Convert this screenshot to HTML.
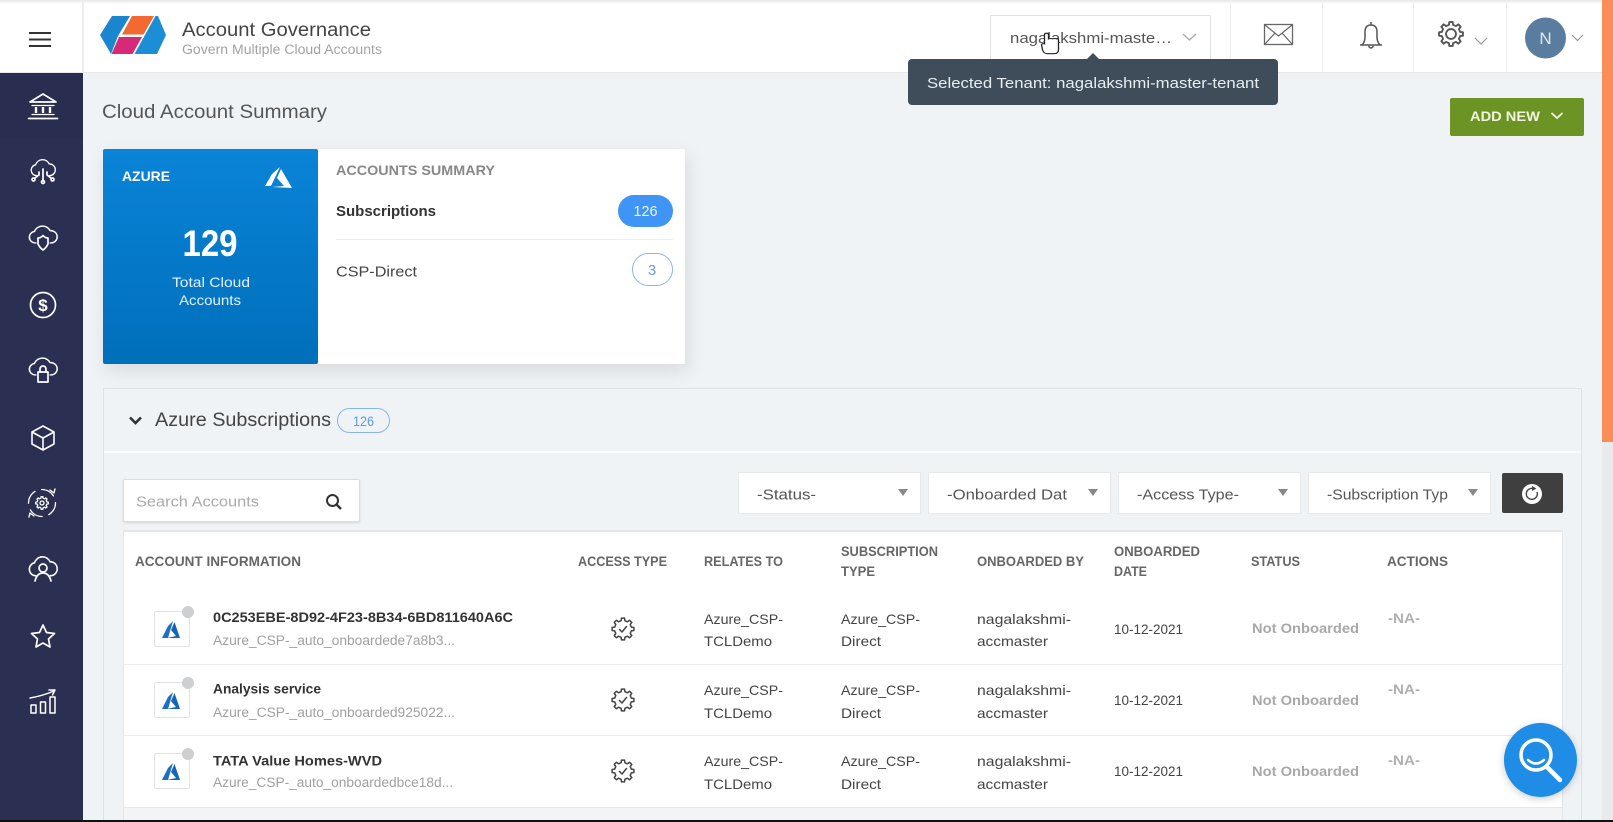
<!DOCTYPE html>
<html lang="en"><head><meta charset="utf-8"><title>Account Governance</title>
<style>
html,body{margin:0;padding:0;width:1613px;height:822px;overflow:hidden;background:#f0f3f6;font-family:"Liberation Sans",sans-serif}
div{position:absolute;box-sizing:border-box}
svg{position:absolute;left:0;top:0;filter:blur(.3px)}
text{font-family:"Liberation Sans",sans-serif}
</style></head><body>
<div style="left:0;top:0;width:1613px;height:73px;background:linear-gradient(#e6e6e6 0,#fff 4px);border-bottom:1px solid #e6e8ea"></div>
<div style="left:82px;top:0;width:2px;height:73px;background:#eeeeee"></div>
<div style="left:0;top:73px;width:83px;height:749px;background:#2b2f52"></div>
<div style="left:0;top:73px;width:83px;height:66px;background:#292d4f"></div>
<div style="left:1602px;top:0;width:11px;height:442px;background:#fb8d58"></div>
<div style="left:1602px;top:442px;width:11px;height:380px;background:#e8eaec"></div>
<div style="left:1230px;top:0;width:1px;height:72px;background:#f0f0f0"></div>
<div style="left:1322px;top:0;width:1px;height:72px;background:#f0f0f0"></div>
<div style="left:1413px;top:0;width:1px;height:72px;background:#f0f0f0"></div>
<div style="left:1506px;top:0;width:1px;height:72px;background:#f0f0f0"></div>
<div style="left:990px;top:15px;width:221px;height:58px;background:#fff;border:1px solid #e2e2e2"></div>
<div style="left:908px;top:59px;width:370px;height:46px;background:#3f4d5b;border-radius:4px"></div>
<div style="left:1450px;top:98px;width:134px;height:38px;background:#6b9424;border-radius:2px"></div>
<div style="left:103px;top:149px;width:582px;height:215px;background:#fff;box-shadow:3px 7px 18px rgba(0,0,0,.1)"></div>
<div style="left:103px;top:149px;width:215px;height:215px;background:linear-gradient(#0a84d8,#006fba);border-radius:2px"></div>
<div style="left:618px;top:195px;width:55px;height:32px;background:#3f95f5;border-radius:16px"></div>
<div style="left:336px;top:239px;width:337px;height:1px;background:#eeeeee"></div>
<div style="left:632px;top:253px;width:41px;height:33px;background:#fff;border:1.5px solid #8fb4e4;border-radius:17px"></div>
<div style="left:103px;top:388px;width:1479px;height:434px;background:#f0f3f6;border:1px solid #dfe2e5;border-bottom:0"></div>
<div style="left:104px;top:451px;width:1477px;height:2px;background:#fafbfc"></div>
<div style="left:337px;top:408px;width:53px;height:25px;border:1.5px solid #8ab4e8;border-radius:13px"></div>
<div style="left:123px;top:479px;width:237px;height:43px;background:#fff;border:1px solid #dcdcdc;box-shadow:0 1px 2px rgba(0,0,0,.12);border-radius:2px"></div>
<div style="left:738px;top:472px;width:183px;height:42px;background:#fff;border:1px solid #e6e8ea"></div>
<div style="left:928px;top:472px;width:183px;height:42px;background:#fff;border:1px solid #e6e8ea"></div>
<div style="left:1118px;top:472px;width:183px;height:42px;background:#fff;border:1px solid #e6e8ea"></div>
<div style="left:1308px;top:472px;width:183px;height:42px;background:#fff;border:1px solid #e6e8ea"></div>
<div style="left:1502px;top:473px;width:61px;height:40px;background:#3f3f3f;border-radius:2px"></div>
<div style="left:123px;top:530px;width:1440px;height:292px;background:#fff;border-top:2px solid #e4e6e9;border-left:1px solid #e4e6e9;border-right:1px solid #e4e6e9"></div>
<div style="left:124px;top:664px;width:1438px;height:1px;background:#ececec"></div>
<div style="left:124px;top:735px;width:1438px;height:1px;background:#ececec"></div>
<div style="left:124px;top:807px;width:1438px;height:13px;background:#f2f4f6;border-top:1px solid #e8e8e8"></div>
<div style="left:154px;top:611px;width:36px;height:36px;background:#fff;border:1px solid #e3e3e3;border-radius:2px"></div>
<div style="left:154px;top:682px;width:36px;height:36px;background:#fff;border:1px solid #e3e3e3;border-radius:2px"></div>
<div style="left:154px;top:753px;width:36px;height:36px;background:#fff;border:1px solid #e3e3e3;border-radius:2px"></div>
<div style="left:182px;top:606px;width:12px;height:12px;background:#cdcfd1;border-radius:50%"></div>
<div style="left:182px;top:677px;width:12px;height:12px;background:#cdcfd1;border-radius:50%"></div>
<div style="left:182px;top:748px;width:12px;height:12px;background:#cdcfd1;border-radius:50%"></div>
<div style="left:1504px;top:723px;width:73px;height:74px;background:#1f8de6;border-radius:50%;box-shadow:0 2px 8px rgba(0,0,0,.2)"></div>
<div style="left:0;top:820px;width:1613px;height:2px;background:#111"></div>

<svg width="1613" height="822" viewBox="0 0 1613 822" xmlns="http://www.w3.org/2000/svg">
<defs>
<polygon id="gear" points="8.28,-1.91 10.89,-1.53 10.89,1.53 8.28,1.91 7.21,4.5 8.78,6.62 6.62,8.78 4.5,7.21 1.91,8.28 1.53,10.89 -1.53,10.89 -1.91,8.28 -4.5,7.21 -6.62,8.78 -8.78,6.62 -7.21,4.5 -8.28,1.91 -10.89,1.53 -10.89,-1.53 -8.28,-1.91 -7.21,-4.5 -8.78,-6.62 -6.62,-8.78 -4.5,-7.21 -1.91,-8.28 -1.53,-10.89 1.53,-10.89 1.91,-8.28 4.5,-7.21 6.62,-8.78 8.78,-6.62 7.21,-4.5"/>
<path id="cloud" d="M-8 7H-8.5A6.8 6.8 0 0 1 -9.5 -6.5A9.5 9.5 0 0 1 8 -7.5A7.2 7.2 0 0 1 9 7H8"/>
<g id="rowico">
<polygon points="8,0 3,5 -3,17 3,17" fill="#1e6fc4"/>
<polygon points="9.5,1 6,9 11,15 2,17 15,17" fill="#1565b8"/>
</g>
<g id="chk" fill="none" stroke="#444" stroke-width="1.5" stroke-linejoin="round" stroke-linecap="round">
<use href="#gear"/><path d="M-3.5 0.5L-1 3L3.5 -2.5"/>
</g>
</defs>

<!-- hamburger -->
<g fill="#333"><rect x="29" y="32" width="22" height="2"/><rect x="29" y="38.5" width="22" height="2"/><rect x="29" y="45" width="22" height="2"/></g>
<!-- logo -->
<polygon points="100,35 112,16 130,16 118,36 111,54" fill="#1b86d0"/>
<polygon points="132,16 154,16 143.500,34.500 122,34.500" fill="#f26a32"/>
<polygon points="119,37 142,37 132.500,54 111.500,54" fill="#d62a78"/>
<polygon points="155.500,16 158,16 166,35 157,54 134.500,54" fill="#1c8ed6"/>
<text x="182" y="36" font-size="19" fill="#444" textLength="189" lengthAdjust="spacingAndGlyphs">Account Governance</text>
<text x="182" y="54" font-size="13.5" fill="#a3a3a3" textLength="200" lengthAdjust="spacingAndGlyphs">Govern Multiple Cloud Accounts</text>
<text x="102" y="118" font-size="19" fill="#555" textLength="225" lengthAdjust="spacingAndGlyphs">Cloud Account Summary</text>

<!-- header right -->
<text x="1010" y="43" font-size="15" fill="#555" textLength="162" lengthAdjust="spacingAndGlyphs">nagalakshmi-maste…</text>
<path d="M1183 34l6.500 6 6.500-6" fill="none" stroke="#aaa" stroke-width="1.300"/>
<polygon points="1087,59 1093,53 1099,59" fill="#3f4d5b"/>
<text x="927" y="88" font-size="15" fill="#e8edf0" textLength="332" lengthAdjust="spacingAndGlyphs">Selected Tenant: nagalakshmi-master-tenant</text>
<path d="M1040 39v11q0 5-4 5h-7q-4 0-5-5l-1-6q1-2 3-1v-11q0-2 2-2t2 2v5q3-1 4 0q3-1 4 0q2-1 2 2z" fill="#fff" stroke="#222" stroke-width="1.300" transform="translate(18.500,2)scale(1,.82) translate(0,8)"/>
<rect x="1264.500" y="24.500" width="28" height="20" fill="none" stroke="#666" stroke-width="1.300"/>
<path d="M1265 25l13.500 11 13.500-11M1265 44l10-11M1292 44l-10-11" fill="none" stroke="#666" stroke-width="1.200"/>
<path d="M1371 22v3M1362 45q3-3 3-8v-5q0-7 6-7t6 7v5q0 5 3 8zM1360 45h22M1368.500 46q2.500 4 5 0" fill="none" stroke="#555" stroke-width="1.500"/>
<g transform="translate(1451,34)scale(1.100)" fill="none" stroke="#555" stroke-width="1.700" stroke-linejoin="round"><use href="#gear"/><circle r="4.500"/></g>
<path d="M1475 38l6 6 6-6" fill="none" stroke="#999" stroke-width="1.200"/>
<circle cx="1545.500" cy="38" r="20.500" fill="#5a7d9f"/>
<text x="1545.500" y="44" font-size="17" fill="#dfe8f0" text-anchor="middle">N</text>
<path d="M1572 35l5.500 5.500 5.500-5.500" fill="none" stroke="#999" stroke-width="1.200"/>
<text x="1470" y="121" font-size="14" font-weight="700" fill="#f3f5e0" textLength="70" lengthAdjust="spacingAndGlyphs">ADD NEW</text>
<path d="M1551.500 113l5.500 5 5.500-5" fill="none" stroke="#f3f5e0" stroke-width="1.800"/>

<!-- sidebar icons -->
<g fill="none" stroke="#fff" stroke-width="1.700" stroke-linecap="round" stroke-linejoin="round">
<path d="M30 102L43 94L56 102Z M28.500 118.500H57.500"/>
<path d="M32 105.500H54 M32 114.500H54" stroke-width="1.200"/>
<path d="M36 107V113M43 107V113M50 107V113" stroke-width="2.400" stroke-linecap="butt"/>
<g transform="translate(43,170)"><use href="#cloud" transform="scale(.78,.8)"/><path d="M0 -1V11M-4 2V5L-8 8M4 2V5L8 8"/><circle cx="-9.500" cy="9.500" r="1.500"/><circle cx="0" cy="12" r="1.500"/><circle cx="9.500" cy="9.500" r="1.500"/></g>
<g transform="translate(43,237)"><use href="#cloud" transform="scale(.9,.85)"/><path d="M-5 1Q-2 1 0 -1.500Q2 1 5 1V7Q3 11 0 13Q-3 11 -5 7Z"/></g>
<g transform="translate(43,305)"><circle r="12.500"/><text x="0" y="6" font-size="17" font-weight="700" text-anchor="middle" fill="#fff" stroke="none">$</text></g>
<g transform="translate(43,369)"><use href="#cloud" transform="scale(.9,.85)"/><rect x="-5" y="3" width="10" height="10"/><path d="M-3 3V0A3 3 0 0 1 3 0V3"/></g>
<path d="M43 426L54 432V444L43 450L32 444V432ZM32 432L43 438L54 432M43 438V450" stroke-width="1.600"/>
<g transform="translate(42,503)"><circle r="13.500" stroke-width="1.300" stroke-dasharray="14 7"/><use href="#gear" transform="scale(.58)" stroke-width="2.200"/><circle r="2" stroke-width="1.300"/><path d="M8 -13L12 -10L13 -14M-8 13L-12 10L-13 14" stroke-width="1.400"/></g>
<g transform="translate(43,569)"><use href="#cloud" transform="scale(.9,.95)"/><circle cy="-1" r="4"/><path d="M-8 12Q-6 4 0 4Q6 4 8 12"/></g>
<polygon points="43,625 46.500,632.500 54.500,633.500 48.500,639 50,647 43,643 36,647 37.500,639 31.500,633.500 39.500,632.500"/>
<g stroke-width="1.500"><rect x="31" y="705" width="5" height="8"/><rect x="40.500" y="702" width="5" height="11"/><rect x="50" y="697" width="5" height="16"/><path d="M30 698Q42 696 54 691M49 690L55 690L52.500 695" stroke-width="1.400"/></g>
</g>

<!-- azure card -->
<text x="122" y="181" font-size="14" font-weight="700" fill="#fff" textLength="48" lengthAdjust="spacingAndGlyphs">AZURE</text>
<g transform="translate(265,167)" fill="#fff"><polygon points="15,0 7,7 0,19 6,19"/><polygon points="16,2 12,11 19,19 7,20 27,21"/></g>
<text x="210" y="256" font-size="37" font-weight="700" fill="#fff" text-anchor="middle" textLength="55" lengthAdjust="spacingAndGlyphs">129</text>
<text x="172" y="287" font-size="14" fill="#e4f1fb" textLength="78" lengthAdjust="spacingAndGlyphs">Total Cloud</text>
<text x="179" y="305" font-size="14" fill="#e4f1fb" textLength="62" lengthAdjust="spacingAndGlyphs">Accounts</text>
<text x="336" y="175" font-size="14" font-weight="700" fill="#888" textLength="159" lengthAdjust="spacingAndGlyphs">ACCOUNTS SUMMARY</text>
<text x="336" y="216" font-size="15" font-weight="700" fill="#333" textLength="100" lengthAdjust="spacingAndGlyphs">Subscriptions</text>
<text x="645.500" y="216" font-size="15" fill="#eaf3fe" text-anchor="middle" textLength="24" lengthAdjust="spacingAndGlyphs">126</text>
<text x="336" y="276.500" font-size="15" fill="#444" textLength="81" lengthAdjust="spacingAndGlyphs">CSP-Direct</text>
<text x="652" y="275" font-size="15" fill="#6d97d8" text-anchor="middle">3</text>

<!-- section -->
<path d="M130 417.500l5.500 5.500 5.500-5.500" fill="none" stroke="#333" stroke-width="2.600"/>
<text x="155" y="426" font-size="19" fill="#444" textLength="176" lengthAdjust="spacingAndGlyphs">Azure Subscriptions</text>
<text x="363.500" y="426" font-size="14" fill="#5f9be8" text-anchor="middle" textLength="21" lengthAdjust="spacingAndGlyphs">126</text>
<text x="136" y="506.500" font-size="15" fill="#aaa" textLength="123" lengthAdjust="spacingAndGlyphs">Search Accounts</text>
<circle cx="332.500" cy="500.500" r="5.500" fill="none" stroke="#333" stroke-width="2"/><path d="M336.500 504.500l4.500 4.500" stroke="#333" stroke-width="2.400"/>

<!-- filters -->
<g font-size="15" fill="#555">
<text x="757" y="499.500" textLength="59" lengthAdjust="spacingAndGlyphs">-Status-</text>
<text x="947" y="499.500" textLength="120" lengthAdjust="spacingAndGlyphs">-Onboarded Dat</text>
<text x="1137" y="499.500" textLength="102" lengthAdjust="spacingAndGlyphs">-Access Type-</text>
<text x="1327" y="499.500" textLength="121" lengthAdjust="spacingAndGlyphs">-Subscription Typ</text>
</g>
<g fill="#888"><polygon points="898,489 908,489 903,496"/><polygon points="1088,489 1098,489 1093,496"/><polygon points="1278,489 1288,489 1283,496"/><polygon points="1468,489 1478,489 1473,496"/></g>
<circle cx="1532" cy="494" r="10" fill="#fff"/>
<path d="M1533 488.500A5.500 5.500 0 1 0 1537 492" fill="none" stroke="#444" stroke-width="1.400"/><polygon points="1532,486 1536.500,488.500 1532,491" fill="#444"/>

<!-- table header -->
<g font-size="13.500" font-weight="700" fill="#666">
<text x="135" y="566" textLength="166" lengthAdjust="spacingAndGlyphs">ACCOUNT INFORMATION</text>
<text x="578" y="566" textLength="89" lengthAdjust="spacingAndGlyphs">ACCESS TYPE</text>
<text x="704" y="566" textLength="79" lengthAdjust="spacingAndGlyphs">RELATES TO</text>
<text x="841" y="556" textLength="97" lengthAdjust="spacingAndGlyphs">SUBSCRIPTION</text>
<text x="841" y="576" textLength="34" lengthAdjust="spacingAndGlyphs">TYPE</text>
<text x="977" y="566" textLength="107" lengthAdjust="spacingAndGlyphs">ONBOARDED BY</text>
<text x="1114" y="556" textLength="86" lengthAdjust="spacingAndGlyphs">ONBOARDED</text>
<text x="1114" y="576" textLength="33" lengthAdjust="spacingAndGlyphs">DATE</text>
<text x="1251" y="566" textLength="49" lengthAdjust="spacingAndGlyphs">STATUS</text>
<text x="1387" y="566" textLength="61" lengthAdjust="spacingAndGlyphs">ACTIONS</text>
</g>

<!-- row 1 -->
<use href="#rowico" transform="translate(165,621)"/>
<text x="213" y="622" font-size="14" font-weight="700" fill="#333" textLength="300" lengthAdjust="spacingAndGlyphs">0C253EBE-8D92-4F23-8B34-6BD811640A6C</text>
<text x="213" y="645" font-size="13.500" fill="#a0a0a0" textLength="242" lengthAdjust="spacingAndGlyphs">Azure_CSP-_auto_onboardede7a8b3...</text>
<use href="#chk" transform="translate(623,629)"/>
<g font-size="14" fill="#444">
<text x="704" y="624" textLength="79" lengthAdjust="spacingAndGlyphs">Azure_CSP-</text>
<text x="704" y="646" textLength="68" lengthAdjust="spacingAndGlyphs">TCLDemo</text>
<text x="841" y="624" textLength="79" lengthAdjust="spacingAndGlyphs">Azure_CSP-</text>
<text x="841" y="646" textLength="40" lengthAdjust="spacingAndGlyphs">Direct</text>
<text x="977" y="624" textLength="94" lengthAdjust="spacingAndGlyphs">nagalakshmi-</text>
<text x="977" y="646" textLength="71" lengthAdjust="spacingAndGlyphs">accmaster</text>
<text x="1114" y="634" textLength="69" lengthAdjust="spacingAndGlyphs">10-12-2021</text>
</g>
<text x="1252" y="633" font-size="14" font-weight="700" fill="#a8a8a8" textLength="107" lengthAdjust="spacingAndGlyphs">Not Onboarded</text>
<text x="1388" y="623" font-size="14" font-weight="700" fill="#b0b0b0" textLength="32" lengthAdjust="spacingAndGlyphs">-NA-</text>

<!-- row 2 -->
<use href="#rowico" transform="translate(165,692)"/>
<text x="213" y="693.500" font-size="14" font-weight="700" fill="#333" textLength="108" lengthAdjust="spacingAndGlyphs">Analysis service</text>
<text x="213" y="717" font-size="13.500" fill="#a0a0a0" textLength="242" lengthAdjust="spacingAndGlyphs">Azure_CSP-_auto_onboarded925022...</text>
<use href="#chk" transform="translate(623,700)"/>
<g font-size="14" fill="#444">
<text x="704" y="695" textLength="79" lengthAdjust="spacingAndGlyphs">Azure_CSP-</text>
<text x="704" y="718" textLength="68" lengthAdjust="spacingAndGlyphs">TCLDemo</text>
<text x="841" y="695" textLength="79" lengthAdjust="spacingAndGlyphs">Azure_CSP-</text>
<text x="841" y="718" textLength="40" lengthAdjust="spacingAndGlyphs">Direct</text>
<text x="977" y="695" textLength="94" lengthAdjust="spacingAndGlyphs">nagalakshmi-</text>
<text x="977" y="718" textLength="71" lengthAdjust="spacingAndGlyphs">accmaster</text>
<text x="1114" y="705" textLength="69" lengthAdjust="spacingAndGlyphs">10-12-2021</text>
</g>
<text x="1252" y="705" font-size="14" font-weight="700" fill="#a8a8a8" textLength="107" lengthAdjust="spacingAndGlyphs">Not Onboarded</text>
<text x="1388" y="694" font-size="14" font-weight="700" fill="#b0b0b0" textLength="32" lengthAdjust="spacingAndGlyphs">-NA-</text>

<!-- row 3 -->
<use href="#rowico" transform="translate(165,763)"/>
<text x="213" y="765.500" font-size="14" font-weight="700" fill="#333" textLength="169" lengthAdjust="spacingAndGlyphs">TATA Value Homes-WVD</text>
<text x="213" y="787" font-size="13.500" fill="#a0a0a0" textLength="240" lengthAdjust="spacingAndGlyphs">Azure_CSP-_auto_onboardedbce18d...</text>
<use href="#chk" transform="translate(623,771)"/>
<g font-size="14" fill="#444">
<text x="704" y="766" textLength="79" lengthAdjust="spacingAndGlyphs">Azure_CSP-</text>
<text x="704" y="789" textLength="68" lengthAdjust="spacingAndGlyphs">TCLDemo</text>
<text x="841" y="766" textLength="79" lengthAdjust="spacingAndGlyphs">Azure_CSP-</text>
<text x="841" y="789" textLength="40" lengthAdjust="spacingAndGlyphs">Direct</text>
<text x="977" y="766" textLength="94" lengthAdjust="spacingAndGlyphs">nagalakshmi-</text>
<text x="977" y="789" textLength="71" lengthAdjust="spacingAndGlyphs">accmaster</text>
<text x="1114" y="776" textLength="69" lengthAdjust="spacingAndGlyphs">10-12-2021</text>
</g>
<text x="1252" y="776" font-size="14" font-weight="700" fill="#a8a8a8" textLength="107" lengthAdjust="spacingAndGlyphs">Not Onboarded</text>
<text x="1388" y="765" font-size="14" font-weight="700" fill="#b0b0b0" textLength="32" lengthAdjust="spacingAndGlyphs">-NA-</text>

<!-- fab -->
<circle cx="1536" cy="755" r="15" fill="none" stroke="#fff" stroke-width="3.500"/>
<path d="M1547 767L1560 780" stroke="#fff" stroke-width="4.500" stroke-linecap="round"/>
<path d="M1528 760Q1536 767 1544 760" fill="none" stroke="#fff" stroke-width="2.500" stroke-linecap="round"/>
</svg>
</body></html>
